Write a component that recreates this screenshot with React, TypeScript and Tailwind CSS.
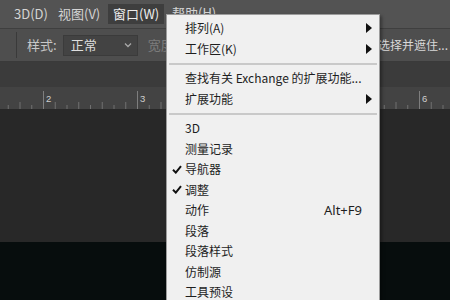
import React from "react";

const font = { fontFamily: '"Noto Sans CJK SC", "Noto Sans", sans-serif' };

type Item =
  | { type: "sep" }
  | { type: "item"; label: string; arrow?: boolean; check?: boolean; shortcut?: string };

const items: Item[] = [
  { type: "item", label: "排列(A)", arrow: true },
  { type: "item", label: "工作区(K)", arrow: true },
  { type: "sep" },
  { type: "item", label: "查找有关 Exchange 的扩展功能..." },
  { type: "item", label: "扩展功能", arrow: true },
  { type: "sep" },
  { type: "item", label: "3D" },
  { type: "item", label: "测量记录" },
  { type: "item", label: "导航器", check: true },
  { type: "item", label: "调整", check: true },
  { type: "item", label: "动作", shortcut: "Alt+F9" },
  { type: "item", label: "段落" },
  { type: "item", label: "段落样式" },
  { type: "item", label: "仿制源" },
  { type: "item", label: "工具预设" },
];

function Ruler() {
  const majors = [-51, 43, 137, 231, 325, 419];
  const labels: Record<number, string> = { 43: "2", 137: "3", 231: "4", 325: "5", 419: "6" };
  const minors: number[] = [];
  for (let m = -51; m < 460; m += 94) {
    for (let k = 1; k < 8; k++) minors.push(m + (94 * k) / 8);
  }
  return (
    <svg width="450" height="22" className="block">
      <rect width="450" height="22" fill="#434343" />
      {minors.map((x, i) => (
        <line key={i} x1={x + 0.5} x2={x + 0.5} y1={i % 2 === 1 ? 15 : 18} y2={22} stroke="#707070" strokeWidth="1" />
      ))}
      {majors.map((x) => (
        <g key={x}>
          <line x1={x + 0.5} x2={x + 0.5} y1={4} y2={22} stroke="#7e7e7e" strokeWidth="1" />
          {labels[x] && (
            <text x={x + 3} y={15} fontSize="9.5" fill="#cfcfcf" style={{ fontFamily: '"Liberation Sans", sans-serif' }}>
              {labels[x]}
            </text>
          )}
        </g>
      ))}
    </svg>
  );
}

export default function App() {
  return (
    <div className="relative w-[450px] h-[300px] overflow-hidden bg-[#070d0d]" style={font}>
      {/* Menu bar */}
      <div className="h-[29px] bg-[#535353] border-b border-[#3f3f3f] flex items-center text-[13px] text-[#d4d4d4]">
        <div className="ml-[14px] w-[44px]">3D(D)</div>
        <div className="w-[50px]">视图(V)</div>
        <div className="h-[20px] w-[56px] bg-[#3e3e3e] flex items-center pl-[5px] text-[#eeeeee]">窗口(W)</div>
        <div className="ml-[8px] -mt-[2px]">帮助(H)</div>
      </div>
      {/* Options bar */}
      <div className="h-[33px] bg-[#4e4e4e] border-b border-[#3a3a3a] flex items-center text-[13px]">
        <div className="ml-[16px] w-[1px] h-[26px] bg-[#3a3a3a]" />
        <div className="ml-[10px] text-[#c8c8c8]">样式:</div>
        <div className="ml-[6px] w-[75px] h-[21px] bg-[#434343] border border-[#3b3b3b] flex items-center pl-[7px] text-[#dedede]">
          <span className="flex-1">正常</span>
          <svg width="8" height="6" viewBox="0 0 8 6" className="mr-[5px]">
            <path d="M1 1.5 L4 4.5 L7 1.5" stroke="#a8a8a8" strokeWidth="1.3" fill="none" />
          </svg>
        </div>
        <div className="ml-[10px] text-[#7c7c7c]">宽度:</div>
        <div className="ml-auto mr-[2px] text-[12px] text-[#d8d8d8]">选择并遮住...</div>
      </div>
      {/* Tab bar */}
      <div className="h-[25px] bg-[#3b3b3b]" />
      {/* Ruler */}
      <Ruler />
      {/* Canvas grey */}
      <div className="h-[133px] bg-[#282828]" />

      {/* Dropdown */}
      <div className="absolute left-[166px] top-[14px] w-[214px] h-[300px] bg-[#f0f0f0] border border-[#9c9c9c] shadow-[2px_2px_3px_rgba(0,0,0,0.35)] pt-[3px] text-[12px] text-[#1e1e1e]">
        {items.map((it, i) =>
          it.type === "sep" ? (
            <div key={i} className="h-[9px] flex items-center px-[2px]">
              <div className="h-[2px] w-full bg-[#c9c9c9]" />
            </div>
          ) : (
            <div key={i} className="h-[20.5px] flex items-center relative">
              <div className="w-[18px] flex justify-center pl-[2px]">
                {it.check && (
                  <svg width="10" height="9" viewBox="0 0 10 9">
                    <path d="M1 4.8 L3.8 7.6 L9 1.2" stroke="#111" strokeWidth="2" fill="none" />
                  </svg>
                )}
              </div>
              <span className="flex-1 leading-none">{it.label}</span>
              {it.shortcut && (
                <span className="mr-[17px] leading-none text-[13px]" style={{ fontFamily: '"Noto Sans", sans-serif' }}>{it.shortcut}</span>
              )}
              {it.arrow && (
                <svg width="6" height="10" viewBox="0 0 6 10" className="mr-[7px]">
                  <path d="M0 0 L6 5 L0 10 Z" fill="#111" />
                </svg>
              )}
            </div>
          )
        )}
      </div>
    </div>
  );
}
